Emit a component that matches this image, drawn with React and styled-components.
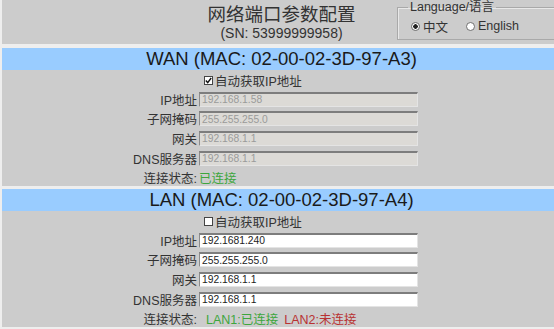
import React, { useState } from 'react'
import styled, { createGlobalStyle } from 'styled-components'

const GlobalStyle = createGlobalStyle`
  html, body {
    margin: 0;
    padding: 0;
    background: #eeeeee;
    overflow: hidden;
  }
  body {
    font-family: "Liberation Sans", "Noto Sans CJK SC", Arial, sans-serif;
    color: #333;
  }
`

const Page = styled.div`
  width: 559px;
  margin-left: 2px;
`

const Header = styled.div`
  height: 44px;
  background: #cccccc;
  display: grid;
  grid-template-columns: 1fr auto 1fr;
  align-items: start;
`

const TitleBlock = styled.div`
  grid-column: 2;
  display: flex;
  flex-direction: column;
  align-items: center;
  padding-top: 5px;
`

const Title = styled.div`
  font-size: 18.5px;
  line-height: 20px;
  color: #333;
`

const Serial = styled.div`
  font-size: 14px;
  line-height: 16px;
  color: #333;
`

const LangBox = styled.fieldset`
  grid-column: 3;
  justify-self: end;
  width: 164px;
  box-sizing: border-box;
  margin: 0;
  padding: 4px 0 5px 10px;
  border: 1px solid #a9a9a9;
  border-right: none;
  box-shadow: inset 1px 1px 0 #e8e8e8;
`

const Legend = styled.legend`
  padding: 0 2px;
  font-size: 12.5px;
  line-height: 14px;
  color: #333;
`

const RadioRow = styled.div`
  display: flex;
  align-items: center;
  height: 16px;
  padding-left: 3px;
  font-size: 12.5px;
  color: #333;
`

const RadioLabel = styled.label`
  display: flex;
  align-items: center;
  gap: 3px;
  margin-right: ${p => p.$space}px;
  cursor: pointer;
`

const RadioDot = styled.span`
  width: 9px;
  height: 9px;
  box-sizing: border-box;
  border-radius: 50%;
  border: 1px solid #6f6f6f;
  background: ${p => (p.$on ? 'radial-gradient(circle, #222 0 2px, #fff 2.5px)' : '#fff')};
`

const Band = styled.div`
  margin-top: ${p => p.$gap}px;
  height: 22px;
  background: #99ccff;
  display: flex;
  align-items: center;
  justify-content: center;
  font-size: 18.5px;
  color: #1a1a1a;
`

const Section = styled.div`
  background: #cccccc;
  height: 116px;
  box-sizing: border-box;
  padding-top: 1px;
  display: grid;
  grid-template-columns: 195px 219px;
  grid-template-rows: 18px 20px 19.5px 19.5px 20px 18px;
  column-gap: 2px;
  align-items: center;
  font-size: 12.5px;
`

const Label = styled.div`
  grid-column: 1;
  text-align: right;
  color: #333;
  white-space: nowrap;
`

const CheckLine = styled.label`
  grid-column: 2;
  display: flex;
  align-items: center;
  gap: 2px;
  padding-left: 5px;
  color: #333;
  cursor: pointer;
`

const Box = styled.span`
  width: 9px;
  height: 9px;
  box-sizing: border-box;
  border: 1px solid #444;
  background: #fff;
  display: flex;
  align-items: center;
  justify-content: center;
`

const Field = styled.input`
  grid-column: 2;
  width: 219px;
  height: 15px;
  box-sizing: border-box;
  margin: 0;
  padding: 0 2px;
  border-style: solid;
  border-width: 2px 1px 1px 1px;
  border-color: #7d7d7d #e4e4e4 #e4e4e4 #8c8c8c;
  background: ${p => (p.disabled ? '#dcdad6' : '#ffffff')};
  color: ${p => (p.disabled ? '#9a9a9a' : '#222')};
  font-family: "Liberation Sans", Arial, sans-serif;
  font-size: 10.3px;
  outline: none;
`

const StatusLine = styled.div`
  grid-column: 2;
  display: flex;
  gap: 6px;
  padding-left: ${p => p.$indent}px;
  white-space: nowrap;
`

const State = styled.span`
  color: ${p => (p.$ok ? '#3da63d' : '#b83232')};
`

function Check({ on, onToggle, children }) {
  return (
    <CheckLine onClick={onToggle}>
      <Box>
        {on && (
          <svg width="7" height="7" viewBox="0 0 7 7">
            <path d="M0.8 3.6 L2.7 5.6 L6.2 1" fill="none" stroke="#111" strokeWidth="1.4" />
          </svg>
        )}
      </Box>
      {children}
    </CheckLine>
  )
}

function Port({ title, gap, dhcp, values, status, indent }) {
  const [auto, setAuto] = useState(dhcp)
  const labels = ['IP地址', '子网掩码', '网关', 'DNS服务器']
  return (
    <>
      <Band $gap={gap}>{title}</Band>
      <Section>
        <Check on={auto} onToggle={() => setAuto(!auto)}>自动获取IP地址</Check>
        {labels.map((l, i) => (
          <React.Fragment key={l}>
            <Label>{l}</Label>
            <Field defaultValue={values[i]} disabled={auto} />
          </React.Fragment>
        ))}
        <Label>连接状态:</Label>
        <StatusLine $indent={indent}>
          {status.map(s => (
            <State key={s.text} $ok={s.ok}>{s.text}</State>
          ))}
        </StatusLine>
      </Section>
    </>
  )
}

export default function App() {
  const [lang, setLang] = useState('zh')
  return (
    <Page>
      <GlobalStyle />
      <Header>
        <TitleBlock>
          <Title>网络端口参数配置</Title>
          <Serial>(SN: 53999999958)</Serial>
        </TitleBlock>
        <LangBox>
          <Legend>Language/语言</Legend>
          <RadioRow>
            <RadioLabel $space={18} onClick={() => setLang('zh')}>
              <RadioDot $on={lang === 'zh'} />
              中文
            </RadioLabel>
            <RadioLabel $space={0} onClick={() => setLang('en')}>
              <RadioDot $on={lang === 'en'} />
              English
            </RadioLabel>
          </RadioRow>
        </LangBox>
      </Header>

      <Port
        title="WAN (MAC: 02-00-02-3D-97-A3)"
        gap={4}
        dhcp={true}
        values={['192.168.1.58', '255.255.255.0', '192.168.1.1', '192.168.1.1']}
        status={[{ text: '已连接', ok: true }]}
        indent={0}
      />
      <Port
        title="LAN (MAC: 02-00-02-3D-97-A4)"
        gap={3}
        dhcp={false}
        values={['192.1681.240', '255.255.255.0', '192.168.1.1', '192.168.1.1']}
        status={[
          { text: 'LAN1:已连接', ok: true },
          { text: 'LAN2:未连接', ok: false },
        ]}
        indent={7}
      />
    </Page>
  )
}
